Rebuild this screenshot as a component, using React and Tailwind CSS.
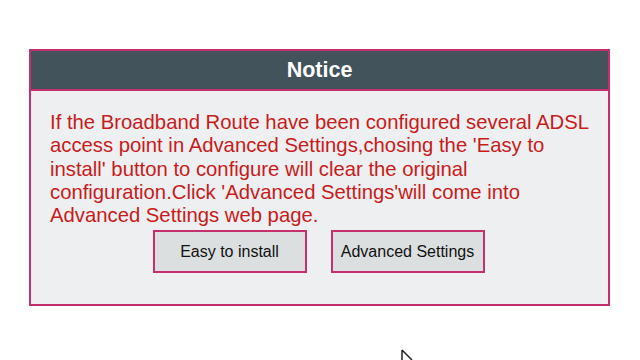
export default function App() {
  return (
    <div className="w-[640px] h-[360px] bg-white relative overflow-hidden" style={{ fontFamily: '"Liberation Sans", Arial, sans-serif' }}>
      <div className="pt-[49px] pl-[29px]">
        <div className="w-[581px] h-[257px] border-2 border-[#c4306e] flex flex-col bg-[#eeeff0]">
          <div className="h-[40px] bg-[#43535b] border-b-2 border-[#c4306e] flex items-center justify-center text-white font-bold text-[21.5px]">
            Notice
          </div>
          <div className="pl-[19px] pr-[4px] pt-[20px] text-[#c81b1b] text-[20.3px] leading-[23.3px] whitespace-nowrap">
            If the Broadband Route have been configured several ADSL<br />
            access point in Advanced Settings,chosing the 'Easy to<br />
            install' button to configure will clear the original<br />
            configuration.Click 'Advanced Settings'will come into<br />
            Advanced Settings web page.
          </div>
          <div className="flex justify-center gap-[24px] mt-[3px] pr-[2px]">
            <button className="w-[154px] h-[43px] border-2 border-[#c4306e] bg-[#dcdfe0] text-[#111] text-[16px]">Easy to install</button>
            <button className="w-[154px] h-[43px] border-2 border-[#c4306e] bg-[#dcdfe0] text-[#111] text-[16px]">Advanced Settings</button>
          </div>
        </div>
      </div>
      <svg className="absolute left-[401px] top-[349px]" width="14" height="14" viewBox="0 0 14 14">
        <path d="M1 1 L1 13 M1 1 L11 11" stroke="#222" strokeWidth="1.5" fill="none" />
      </svg>
    </div>
  );
}
